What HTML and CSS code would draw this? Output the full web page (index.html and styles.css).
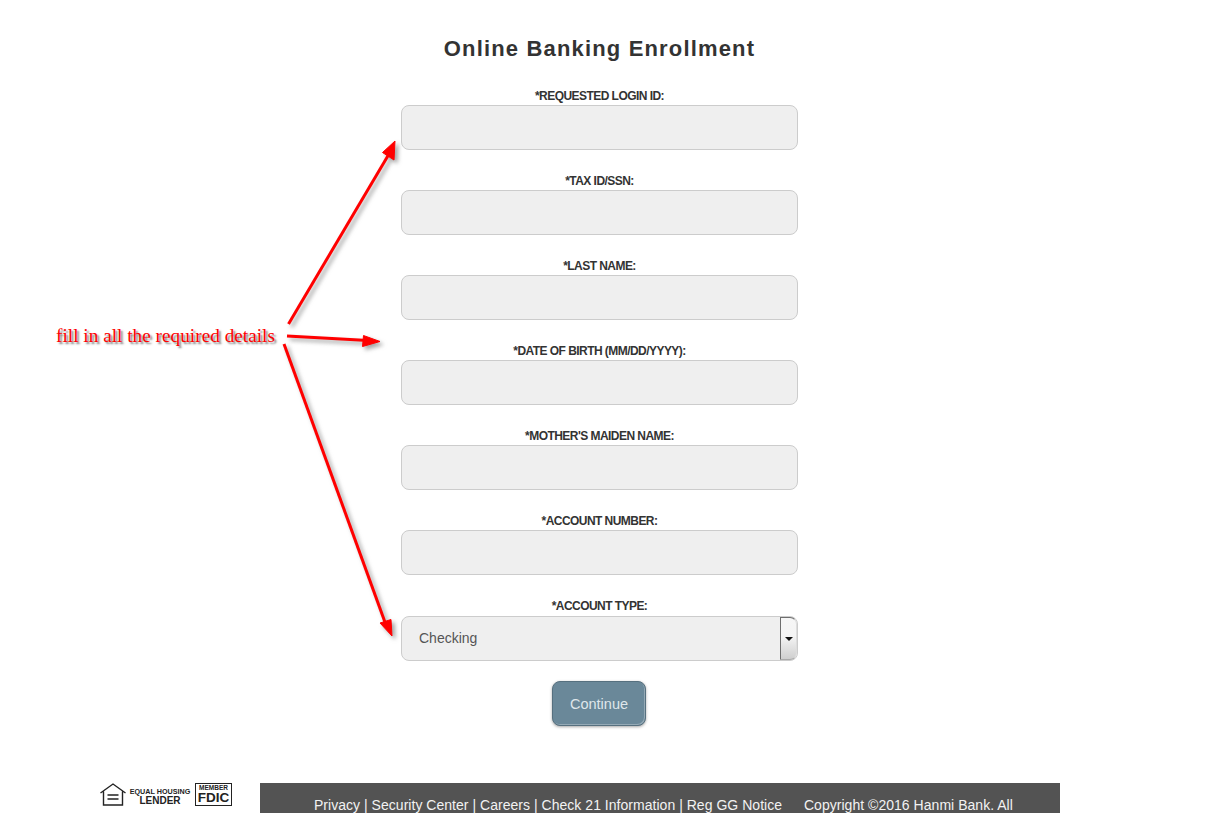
FILE: index.html
```html
<!DOCTYPE html>
<html lang="en">
<head>
<meta charset="utf-8">
<title>Online Banking Enrollment</title>
<link rel="stylesheet" href="styles.css">
</head>
<body>
<main class="page">
  <h1 class="title">Online Banking Enrollment</h1>
  <form class="form">
    <div class="field"><label class="label">*REQUESTED LOGIN ID:</label><input class="control" type="text"></div>
    <div class="field"><label class="label">*TAX ID/SSN:</label><input class="control" type="text"></div>
    <div class="field"><label class="label">*LAST NAME:</label><input class="control" type="text"></div>
    <div class="field"><label class="label">*DATE OF BIRTH (MM/DD/YYYY):</label><input class="control" type="text"></div>
    <div class="field"><label class="label">*MOTHER'S MAIDEN NAME:</label><input class="control" type="text"></div>
    <div class="field"><label class="label">*ACCOUNT NUMBER:</label><input class="control" type="text"></div>
    <div class="field field-last"><label class="label">*ACCOUNT TYPE:</label>
      <div class="select-wrap">
        <select class="control select"><option>Checking</option></select>
        <span class="select-btn"><span class="select-arrow"></span></span>
      </div>
    </div>
    <button class="continue" type="button">Continue</button>
  </form>
  <footer class="footer">
    <div class="logos">
      <svg class="house" width="26" height="23" viewBox="0 0 26 23" aria-hidden="true">
        <path d="M.5 10 13 1l12.500 9M3.500 8.500V22h19V8.500" fill="none" stroke="#222" stroke-width="1.400"/>
        <path d="M7.500 12h11M7.500 16h11" stroke="#222" stroke-width="1.400"/>
      </svg>
      <div class="ehl"><span class="ehl-top">EQUAL HOUSING</span><span class="ehl-bottom">LENDER</span></div>
      <div class="fdic"><span class="fdic-top">MEMBER</span><span class="fdic-bottom">FDIC</span></div>
    </div>
    <div class="footer-bar">Privacy | Security Center | Careers | Check 21 Information | Reg GG Notice <span class="copyright">Copyright ©2016 Hanmi Bank. All</span></div>
  </footer>
</main>
<svg class="arrows" width="400" height="660" viewBox="0 0 400 660" aria-hidden="true">
  <g fill="#f00" stroke="#f00">
    <path d="M288.500 324 389 154" stroke-width="3"/>
    <path d="M395 141 394 160 382.500 152.500Z" stroke-width="1"/>
    <path d="M287 336 368 340.500" stroke-width="3"/>
    <path d="M380 341.500 362.500 346.500 363.500 335.500Z" stroke-width="1"/>
    <path d="M284 344 386 625" stroke-width="3"/>
    <path d="M392 636 380 623 391 619.500Z" stroke-width="1"/>
  </g>
</svg>
<p class="note">fill in all the required details</p>
</body>
</html>
```
FILE: styles.css
```css
html, body {
  margin: 0;
  padding: 0;
  height: 813px;
  overflow: hidden;
  background: #fff;
  font-family: "Liberation Sans", Arial, sans-serif;
  color: #333;
}
.page {
  display: flex;
  flex-direction: column;
  align-items: center;
  width: 1199px;
}
.title {
  margin: 36px 0 0;
  font-size: 22px;
  line-height: 26px;
  font-weight: bold;
  letter-spacing: 1.16px;
  color: #333;
}
.form {
  display: flex;
  flex-direction: column;
  align-items: center;
  width: 397px;
  margin: 27px 0 0 0;
}
.field {
  display: flex;
  flex-direction: column;
  align-items: center;
  width: 100%;
  margin-bottom: 24px;
}
.field-last {
  margin-bottom: 20px;
}
.label {
  font-size: 12px;
  line-height: 14px;
  font-weight: bold;
  letter-spacing: -.55px;
  color: #333;
  margin-bottom: 2px;
}
.field-last .label {
  margin-bottom: 3px;
}
.control {
  box-sizing: border-box;
  display: block;
  width: 397px;
  height: 45px;
  margin: 0;
  background: #efefef;
  border: 1px solid #ccc;
  border-radius: 8px;
  font-family: inherit;
  font-size: 14px;
  color: #555;
}
.select-wrap {
  position: relative;
  width: 397px;
  height: 45px;
}
.select {
  appearance: none;
  -webkit-appearance: none;
  padding: 0 0 2px 17px;
}
.select-btn {
  position: absolute;
  top: 1px;
  right: 1px;
  box-sizing: border-box;
  width: 17px;
  height: 43px;
  display: flex;
  align-items: center;
  justify-content: center;
  background: linear-gradient(#f6f6f6, #f4f4f4 45%, #cfcfcf);
  border: 1px solid #6e6e6e;
  border-right-color: #ddd;
  border-bottom-color: #aaa;
  border-radius: 0 7px 7px 0;
}
.select-arrow {
  width: 0;
  height: 0;
  border-left: 4px solid transparent;
  border-right: 4px solid transparent;
  border-top: 4px solid #111;
}
.continue {
  box-sizing: border-box;
  width: 94px;
  height: 45px;
  margin-right: 1px;
  padding: 0;
  background: #6a8899;
  border: 1px solid #56707f;
  border-radius: 8px;
  box-shadow: inset -1px -1px 0 #94a9b5, 0 1px 3px rgba(0, 0, 0, .35);
  font-family: inherit;
  font-size: 14.500px;
  color: #dfe6ea;
}
.footer {
  display: flex;
  align-items: flex-start;
  align-self: flex-start;
  width: 960px;
  margin: 57px 0 0 100px;
}
.logos {
  display: flex;
  align-items: flex-start;
  width: 160px;
  flex: none;
  color: #222;
}
.house {
  display: block;
  flex: none;
}
.ehl {
  display: flex;
  flex-direction: column;
  align-items: center;
  width: 60px;
  margin: 4px 5px 0 4px;
  font-weight: bold;
}
.ehl-top {
  font-size: 7.200px;
  line-height: 9px;
  white-space: nowrap;
}
.ehl-bottom {
  font-size: 10px;
  line-height: 10px;
}
.fdic {
  box-sizing: border-box;
  display: flex;
  flex-direction: column;
  align-items: center;
  width: 37px;
  height: 23px;
  border: 1px solid #222;
  font-weight: bold;
}
.fdic-top {
  font-size: 6.500px;
  line-height: 7px;
}
.fdic-bottom {
  font-size: 13.500px;
  line-height: 13px;
}
.footer-bar {
  box-sizing: border-box;
  flex: 1;
  height: 30px;
  padding: 14px 0 0 54px;
  background: #535353;
  color: #f2f2f2;
  font-size: 14px;
  line-height: 16px;
  letter-spacing: .03px;
  white-space: nowrap;
}
.copyright {
  margin-left: 18px;
}
.arrows {
  position: absolute;
  left: 0;
  top: 0;
  overflow: visible;
  filter: drop-shadow(3px 3px 2px rgba(90, 90, 90, .55));
}
.note {
  position: absolute;
  left: 56px;
  top: 325px;
  margin: 0;
  font-family: "Liberation Serif", "Times New Roman", serif;
  font-size: 19.300px;
  line-height: 22px;
  color: #f00;
  white-space: nowrap;
  text-shadow: 2px 2px 2px rgba(80, 80, 80, .75);
}
```
